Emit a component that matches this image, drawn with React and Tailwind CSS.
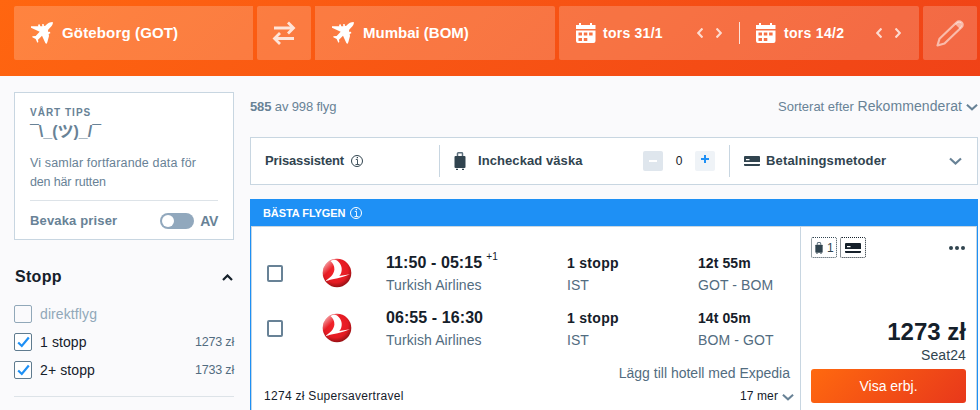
function Plane() {
  return (
    <svg className="h-[22px] w-[22px] shrink-0" viewBox="0 0 66 66" fill="#fff">
      <path d="M65 0C67 5 64 11 57 17L51 24L52 30L57 29L58 34L53 36L54 42L49 61L46 66L43 63L33 41L21 53L22 60L19 62L14 51L4 46L4 43L14 42L26 29L0 17L0 13L22 13L21 8L26 7L28 13L34 13L33 7L38 6L39 12L43 11C50 3 58 0 65 0Z" />
    </svg>
  );
}

function CalendarIcon() {
  return (
    <svg className="h-5 w-5 shrink-0" viewBox="0 0 20 20">
      <path fill="#fff" fillRule="evenodd" d="M3 0h2v2h9V0h2v2h3.500v4H0V2h3zM0 7.500h19.500V18a2 2 0 0 1-2 2H2a2 2 0 0 1-2-2zM2.500 9.500v3h3.500v-3zM7.800 9.500v3h3.500v-3zM13.100 9.500v3h3.500v-3zM2.500 15v3h3.500v-3zM7.800 15v3h3.500v-3z" />
    </svg>
  );
}

function Chevron({ className, d = "M1 1.500L6.500 6.500L12 1.500", box = "0 0 13 8" }) {
  return (
    <svg className={className} viewBox={box} fill="none" stroke="currentColor" strokeWidth="2.200">
      <path d={d} />
    </svg>
  );
}

function Arrows() {
  return (
    <div className="flex gap-[13px] text-white/75">
      <Chevron className="h-[10px] w-[6px]" box="0 0 6 10" d="M5.500.5L1.200 5L5.500 9.500" />
      <Chevron className="h-[10px] w-[6px]" box="0 0 6 10" d="M.5.5L4.800 5L.5 9.500" />
    </div>
  );
}

function Info({ className }) {
  return (
    <svg className={className} viewBox="0 0 12 12" fill="none" stroke="currentColor">
      <circle cx="6" cy="6" r="5.500" />
      <path d="M4.800 4.500h1.700M6.500 4.500v4.500M4.500 9.500h4" strokeWidth=".9" />
      <path d="M5.700 2.600h1.300" strokeWidth="1.200" />
    </svg>
  );
}

function Suitcase({ className }) {
  return (
    <svg className={className} viewBox="0 0 12 18">
      <path d="M3.500 4V1.500Q3.500.8 4.300.8h3.400q.8 0 .8.700V4" fill="none" stroke="#5c6f7c" strokeWidth="1.500" />
      <rect x=".5" y="4" width="11" height="12" rx="1" fill="#31444f" />
      <path d="M2 17.300h2M8 17.300h2" stroke="#31444f" strokeWidth="1.200" />
    </svg>
  );
}

function Card({ className }) {
  return (
    <svg className={className} viewBox="0 0 16 10" fill="currentColor">
      <path fillRule="evenodd" d="M1 0h14q1 0 1 1v5H0V1q0-1 1-1zM2 3v1.300h3.500V3z" />
      <path d="M0 8h16V9q0 1-1 1H1Q0 10 0 9z" />
    </svg>
  );
}

function Logo() {
  return (
    <svg className="h-[30px] w-[30px]" viewBox="0 0 30 30">
      <defs>
        <radialGradient id="ball" cx=".45" cy=".4" r=".62">
          <stop offset="0" stopColor="#f4242b" />
          <stop offset=".7" stopColor="#e41b23" />
          <stop offset="1" stopColor="#8e1013" />
        </radialGradient>
        <linearGradient id="shine" x1=".1" y1=".1" x2="1" y2="1">
          <stop offset="0" stopColor="#fff" stopOpacity=".65" />
          <stop offset=".25" stopColor="#fff" stopOpacity="0" />
        </linearGradient>
      </defs>
      <circle cx="15" cy="15" r="14.300" fill="url(#ball)" />
      <circle cx="15" cy="15" r="14.300" fill="url(#shine)" />
      <path fill="#fff" d="M8.500 3C11 1.400 13.500 1.500 14.500 2.300C18.500 4.700 20.500 9.500 19.500 13.500C19.100 15.500 18.200 17 17.200 18.100L28 16.200C20 19.500 11.500 21 3 23C7.500 20.500 12 16.500 12.400 11.500C12.500 8 11 5 8.500 3Z" />
    </svg>
  );
}

function Filter({ label, price, checked }) {
  return (
    <div className="flex h-[28px] items-center">
      <div className={`flex h-[18px] w-[18px] items-center justify-center rounded-[2px] border ${checked ? "border-[#5f7b8f] bg-white" : "border-[#91a8b9] bg-[#fafafc]"}`}>
        {checked && (
          <svg className="h-[12px] w-[13px]" viewBox="0 0 13 12" fill="none" stroke="#1e90f5" strokeWidth="2.200">
            <path d="M1.200 6.500L4.800 10L11.800 1.500" />
          </svg>
        )}
      </div>
      <span className={`ml-2 text-sm tracking-[0.100px] ${checked ? "text-[#15202a]" : "text-[#91a8b9]"}`}>{label}</span>
      <span className="ml-auto text-[12.500px] tracking-[-0.200px] text-[#526c80]">{price}</span>
    </div>
  );
}

function Flight({ time, plus, duration, route }) {
  return (
    <div className="flex h-[55px]">
      <div className="mt-[18px] ml-[15px] h-[17px] w-4 rounded-[2px] border-2 border-[#688296]" />
      <div className="mt-[11px] ml-[39px] w-[64px]"><Logo /></div>
      <div className="w-[181px]">
        <div className="h-[25px] pt-[4px] text-base leading-[24px] font-bold tracking-[0.080px] whitespace-nowrap text-[#15202a]">
          {time}
          {plus && <span className="relative -top-[8px] ml-1 text-[10px] font-normal">{plus}</span>}
        </div>
        <div className="mt-[3px] text-sm leading-5 tracking-[0.080px] text-[#526c80]">Turkish Airlines</div>
      </div>
      <div className="w-[131px]">
        <div className="h-[25px] pt-[6px] text-sm leading-5 font-bold tracking-[0.300px] text-[#15202a]">1 stopp</div>
        <div className="mt-[3px] text-sm leading-5 text-[#526c80]">IST</div>
      </div>
      <div>
        <div className="h-[25px] pt-[6px] text-sm leading-5 font-bold tracking-[0.080px] text-[#15202a]">{duration}</div>
        <div className="mt-[3px] text-sm leading-5 tracking-[0.100px] text-[#526c80]">{route}</div>
      </div>
    </div>
  );
}

export default function App() {
  return (
    <div className="h-[410px] w-[980px] overflow-hidden bg-[#fafafc] font-['Liberation_Sans',Arial,sans-serif]">
      <header className="flex h-[76px] gap-1 bg-[linear-gradient(135deg,#ff6610_0%,#f04217_100%)] pt-[6px] pl-[14px] text-[15px] font-bold text-white">
        <div className="flex h-[54px] w-[239px] items-center rounded-l-[2px] bg-white/20 pl-[17px]">
          <Plane /><span className="ml-[9px] tracking-[0.150px]">Göteborg (GOT)</span>
        </div>
        <div className="flex h-[54px] w-[54px] items-center justify-center rounded-[2px] bg-white/20">
          <svg className="h-6 w-6" viewBox="0 0 24 24" fill="none" stroke="#fff" strokeOpacity=".8" strokeWidth="2.800">
            <path d="M2 7h19M16 1.500L21.500 7L16 12.500M22 17.500H3M8 12L2.500 17.500L8 23" />
          </svg>
        </div>
        <div className="flex h-[54px] w-[240px] items-center rounded-r-[2px] bg-white/20 pl-[17px]">
          <Plane /><span className="ml-[9px]">Mumbai (BOM)</span>
        </div>
        <div className="flex h-[54px] w-[360px] items-center rounded-[2px] bg-white/20 pl-[17px]">
          <CalendarIcon />
          <span className="ml-[7px] w-[94px] text-sm tracking-[0.250px]">tors 31/1</span>
          <Arrows />
          <div className="mr-[16px] ml-[17px] h-[22px] w-px bg-white/80" />
          <CalendarIcon />
          <span className="ml-[8px] w-[92px] text-sm tracking-[0.300px]">tors 14/2</span>
          <Arrows />
        </div>
        <div className="flex h-[54px] w-[54px] items-center justify-center rounded-[2px] bg-white/20">
          <svg className="h-[27px] w-[28px]" viewBox="0 0 28 27" fill="none" stroke="#fff" strokeOpacity=".55" strokeWidth="2.200" strokeLinejoin="round">
            <path d="M1.500 25.500L3.500 18.800L20.500 2.500Q23 .3 25.500 2.300Q27.800 4.600 25.500 7.300L8.500 23.500Z" />
            <path d="M19 4L24 9L26 6L25 2L22 1.500Z" fill="#fff" fillOpacity=".5" stroke="none" />
          </svg>
        </div>
      </header>

      <div className="flex w-[978px] gap-4 pl-[14px]">
        <aside className="w-[220px] shrink-0 pt-4">
          <section className="h-[148px] border border-[#c8d6e1] bg-white px-[15px] pt-[14px] text-[#688296]">
            <div className="text-[10px] leading-3 font-bold tracking-[1px]">VÅRT TIPS</div>
            <div className="h-[26px] font-['Liberation_Sans','Noto_Sans_CJK_JP',sans-serif] text-base leading-[26px] font-bold whitespace-nowrap">¯\_(ツ)_/¯</div>
            <p className="pt-[9px] text-[12.500px] leading-[19px] whitespace-nowrap">
              <span className="tracking-[0.150px]">Vi samlar fortfarande data för</span><br />
              <span className="tracking-[-0.150px]">den här rutten</span>
            </p>
            <div className="mt-[8px] flex h-[41px] items-center border-t border-[#dde3e8]">
              <span className="text-[13px] font-bold tracking-[0.150px]">Bevaka priser</span>
              <div className="ml-auto flex h-4 w-[34px] items-center rounded-full bg-[#91a8bd] p-[2px]"><div className="h-3 w-3 rounded-full bg-white" /></div>
              <span className="ml-[6px] text-sm font-bold tracking-[-0.300px]">AV</span>
            </div>
          </section>
          <div className="mt-[24px] flex h-[26px] items-center justify-between pr-px pl-px text-base font-bold tracking-[0.300px] text-[#15202a]">
            <span>Stopp</span>
            <Chevron className="h-[7px] w-[11px]" box="0 0 11 7" d="M1 6L5.500 1.500L10 6" />
          </div>
          <div className="mt-[10px] h-[97px] border-b border-[#dde3e8]">
            <Filter label="direktflyg" />
            <Filter label="1 stopp" price="1273 zł" checked />
            <Filter label="2+ stopp" price="1733 zł" checked />
          </div>
        </aside>

        <main className="w-[728px]">
          <div className="flex h-[61px] items-center text-[13px] text-[#688296]">
            <span className="tracking-[-0.130px]"><b>585</b> av 998 flyg</span>
            <span className="ml-auto">Sorterat efter <span className="text-sm tracking-[0.080px]">Rekommenderat</span></span>
            <Chevron className="ml-[4px] h-2 w-3" />
          </div>
          <div className="flex h-[48px] items-center border border-[#c8d6e1] bg-white text-[13px] font-bold text-[#31444f]">
            <div className="flex h-8 w-[189px] items-center border-r border-[#c8d6e1] pl-[14px] tracking-[-0.150px]">
              Prisassistent<Info className="ml-[7px] h-3 w-3" />
            </div>
            <div className="flex h-8 w-[290px] items-center border-r border-[#c8d6e1] pl-[14px]">
              <Suitcase className="h-[18px] w-3" />
              <span className="ml-[12px] tracking-[0.080px]">Incheckad väska</span>
              <div className="ml-auto flex h-5 w-5 items-center justify-center rounded-[2px] bg-[#dfe6ed]"><div className="h-[2px] w-2 bg-white" /></div>
              <span className="w-8 text-center text-xs font-normal text-[#15202a]">0</span>
              <div className="mr-[14px] flex h-5 w-5 items-center justify-center rounded-[2px] bg-[#eff3f7]">
                <svg className="mb-[4px] h-2 w-2" viewBox="0 0 8 8" stroke="#1e90f5" strokeWidth="2"><path d="M0 4h8M4 0v8" /></svg>
              </div>
            </div>
            <div className="flex flex-1 items-center pr-[15px] pl-[14px]">
              <Card className="h-[10px] w-4" /><span className="ml-[6px] tracking-[0.150px]">Betalningsmetoder</span>
              <Chevron className="ml-auto h-2 w-[13px] text-[#688296]" />
            </div>
          </div>
          <div className="mt-[14px] flex h-[27px] items-center bg-[#1e90f5] pt-px pl-[13px] text-[11px] font-bold text-white">
            <span className="w-[87px] leading-4 tracking-[-0.080px]">BÄSTA FLYGEN</span><Info className="h-3 w-3" />
          </div>
          <div className="h-[186px] border-x border-[#1e90f5] bg-white">
            <div className="flex h-full border-x border-t border-[#c8d6e1]">
              <div className="w-[549px] border-r border-[#c8d6e1] pt-[20px]">
                <Flight time="11:50 - 05:15" plus="+1" duration="12t 55m" route="GOT - BOM" />
                <Flight time="06:55 - 16:30" duration="14t 05m" route="BOM - GOT" />
                <div className="pt-[6px] pr-[10px] text-right text-sm leading-5 text-[#526c80]">Lägg till hotell med Expedia</div>
                <div className="flex h-[26px] items-center pr-[6px] pl-[12px] text-xs text-[#15202a]">
                  <span className="tracking-[0.290px]">1274 zł Supersavertravel</span>
                  <span className="mr-1 ml-auto tracking-[0.100px]">17 mer</span>
                  <Chevron className="mt-px h-2 w-3 text-[#688296]" />
                </div>
              </div>
              <div className="flex-1 px-[10px] pt-[10px]">
                <div className="flex h-[21px] items-center gap-[3px]">
                  <div className="flex h-[21px] w-[26px] items-center rounded-[2px] border border-dotted border-[#31444f] pl-[3px] text-xs text-[#31444f]">
                    <Suitcase className="h-3 w-2" /><span className="ml-1">1</span>
                  </div>
                  <div className="flex h-[21px] w-[26px] items-center justify-center rounded-[2px] border border-dotted border-[#15202a] text-[#15202a]"><Card className="h-[10px] w-4" /></div>
                  <div className="mr-px ml-auto flex gap-[2px]">
                    <i className="h-1 w-1 rounded-full bg-[#31444f]" /><i className="h-1 w-1 rounded-full bg-[#31444f]" /><i className="h-1 w-1 rounded-full bg-[#31444f]" />
                  </div>
                </div>
                <div className="mt-[60px] text-right text-[24px] leading-[28px] font-bold text-[#15202a]">1273 zł</div>
                <div className="text-right text-sm leading-[18px] tracking-[0.100px] text-[#31444f]">Seat24</div>
                <div className="mt-[5px] flex h-[34px] items-center justify-center rounded-[3px] bg-[linear-gradient(135deg,#ff690f,#e8381b)] text-sm text-white">Visa erbj.</div>
              </div>
            </div>
          </div>
        </main>
      </div>
    </div>
  );
}
